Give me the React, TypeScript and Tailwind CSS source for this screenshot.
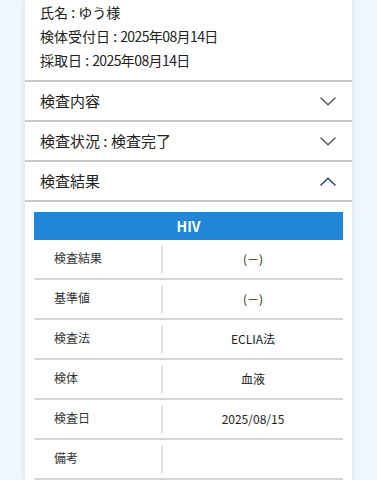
import React from 'react';

const font = { fontFamily: '"Noto Sans CJK JP", sans-serif' };

const rows = [
    { label: '検査結果', value: '(－)' },
    { label: '基準値', value: '(－)' },
    { label: '検査法', value: 'ECLIA法' },
    { label: '検体', value: '血液' },
    { label: '検査日', value: '2025/08/15' },
    { label: '備考', value: '' },
];

function Chevron({ up }: { up?: boolean }) {
    return (
        <svg width="16" height="9" viewBox="0 0 16 9" fill="none" className={up ? 'text-[#1d3c78]' : 'text-[#555]'}>
            <path d={up ? 'M0.5 8.5 L8 1.2 L15.5 8.5' : 'M0.5 0.5 L8 7.8 L15.5 0.5'} stroke="currentColor" strokeWidth="1.3" />
        </svg>
    );
}

function AccordionRow({ title, open }: { title: string; open?: boolean }) {
    return (
        <div className="h-[40px] flex items-center justify-between pl-[15px] pr-[16px] border-b-2 border-[#c9c9c9]">
            <span className="text-[15px] text-[#222]">{title}</span>
            <Chevron up={open} />
        </div>
    );
}

export default function App() {
    return (
        <div className="min-h-[480px] bg-[#eef7fe] px-[25px]" style={font}>
            <div className="bg-white min-h-[480px] shadow-[0_0_6px_rgba(0,0,0,0.12)]">
                <div className="h-[82px] pl-[15px] text-[14px] text-[#222] leading-[24px] border-b-2 border-[#c9c9c9]">
                    <p>氏名 : ゆう様</p>
                    <p>検体受付日 : <span className="tracking-[-0.6px]">2025年08月14日</span></p>
                    <p>採取日 : <span className="tracking-[-0.6px]">2025年08月14日</span></p>
                </div>
                <AccordionRow title="検査内容" />
                <AccordionRow title="検査状況 : 検査完了" />
                <AccordionRow title="検査結果" open />
                <div className="px-[9px] pt-[10px]">
                    <div className="h-[28px] bg-[#2185d8] flex items-center justify-center text-white font-bold text-[14px]">HIV</div>
                    {rows.map((r) => (
                        <div key={r.label} className="h-[40px] flex items-center border-b-2 border-[#d6d6d6]">
                            <div className="w-[127px] pl-[20px] text-[12px] text-[#333] -mt-[3px]">{r.label}</div>
                            <div className="w-[2px] h-[27px] bg-[#e0e0e0]" />
                            <div className="flex-1 text-center text-[12px] text-[#222]">{r.value}</div>
                        </div>
                    ))}
                </div>
            </div>
        </div>
    );
}
